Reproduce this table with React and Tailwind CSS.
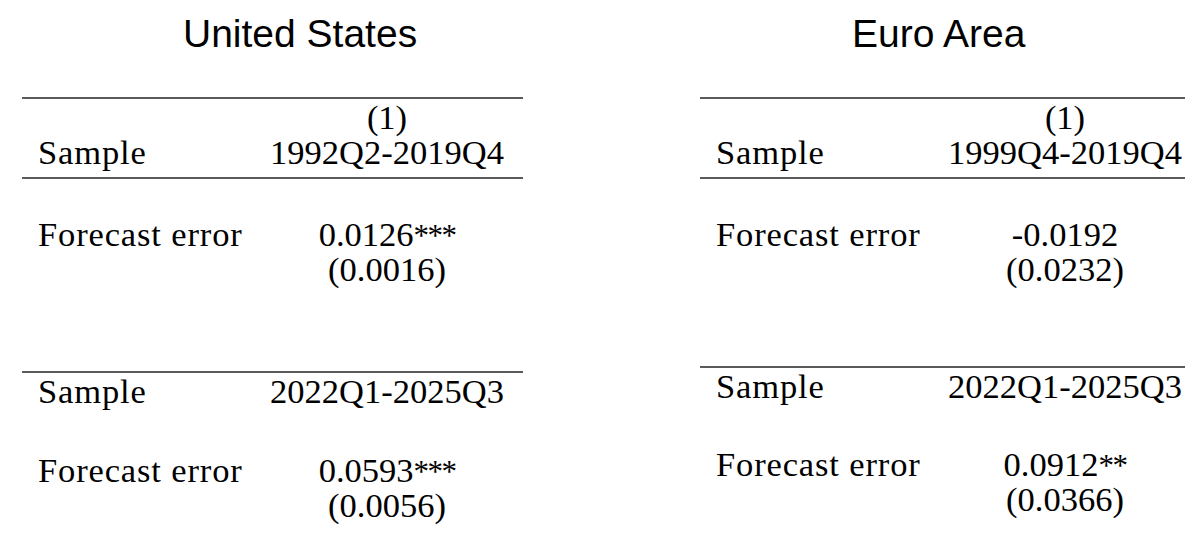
import React from "react";

const serif = { fontFamily: '"Liberation Serif", "Times New Roman", serif' };

function Line() {
  return <div className="h-[2px] w-full bg-[#5a5a5a]" />;
}

function Row({ label, children, className = "" }) {
  return (
    <div className={"flex items-end whitespace-nowrap " + className}>
      <div className="w-[245px] shrink-0 pl-4 tracking-[0.025em]">{label}</div>
      <div className="w-[240px] shrink-0 text-center">{children}</div>
    </div>
  );
}

function Stars({ n }) {
  return <span className="text-[31px] leading-none tracking-[-0.05em]">{n}</span>;
}

function Panel({ title, titlePad, width, top, bottom, lowerMt, lowerGap }) {
  return (
    <div className="flex flex-col" style={{ width }}>
      <div
        className={"mt-[15px] whitespace-nowrap text-[39px] leading-[38px] text-black " + titlePad}
        style={{ fontFamily: '"Liberation Sans", Arial, sans-serif' }}
      >
        {title}
      </div>
      <div className="mt-[44px] text-[34.5px] leading-[35px] text-black" style={serif}>
        <Line />
        <div className="pt-[1px] pb-[7px]">
          <Row label="">(1)</Row>
          <Row label="Sample">{top.sample}</Row>
        </div>
        <Line />
        <Row label="Forecast error" className="mt-[38px] items-start">
          <div>
            {top.coef}
            {top.stars ? <Stars n={top.stars} /> : null}
          </div>
          <div>{top.se}</div>
        </Row>
        <div className={lowerMt}>
          <Line />
          <Row label="Sample" className="pt-[1px]">{bottom.sample}</Row>
          <Row label="Forecast error" className={lowerGap + " items-start"}>
            <div>
              {bottom.coef}
              {bottom.stars ? <Stars n={bottom.stars} /> : null}
            </div>
            <div>{bottom.se}</div>
          </Row>
        </div>
      </div>
    </div>
  );
}

export default function App() {
  return (
    <div className="w-[1200px] h-[552px] bg-white overflow-hidden flex">
      <div className="ml-[22px]">
        <Panel
          title="United States"
          titlePad="pl-[161px]"
          width="501px"
          top={{ sample: "1992Q2-2019Q4", coef: "0.0126", stars: "***", se: "(0.0016)" }}
          bottom={{ sample: "2022Q1-2025Q3", coef: "0.0593", stars: "***", se: "(0.0056)" }}
          lowerMt="mt-[84px]"
          lowerGap="mt-[44px]"
        />
      </div>
      <div className="ml-[177px]">
        <Panel
          title="Euro Area"
          titlePad="pl-[152px]"
          width="485px"
          top={{ sample: "1999Q4-2019Q4", coef: "-0.0192", stars: "", se: "(0.0232)" }}
          bottom={{ sample: "2022Q1-2025Q3", coef: "0.0912", stars: "**", se: "(0.0366)" }}
          lowerMt="mt-[79px]"
          lowerGap="mt-[43px]"
        />
      </div>
    </div>
  );
}
